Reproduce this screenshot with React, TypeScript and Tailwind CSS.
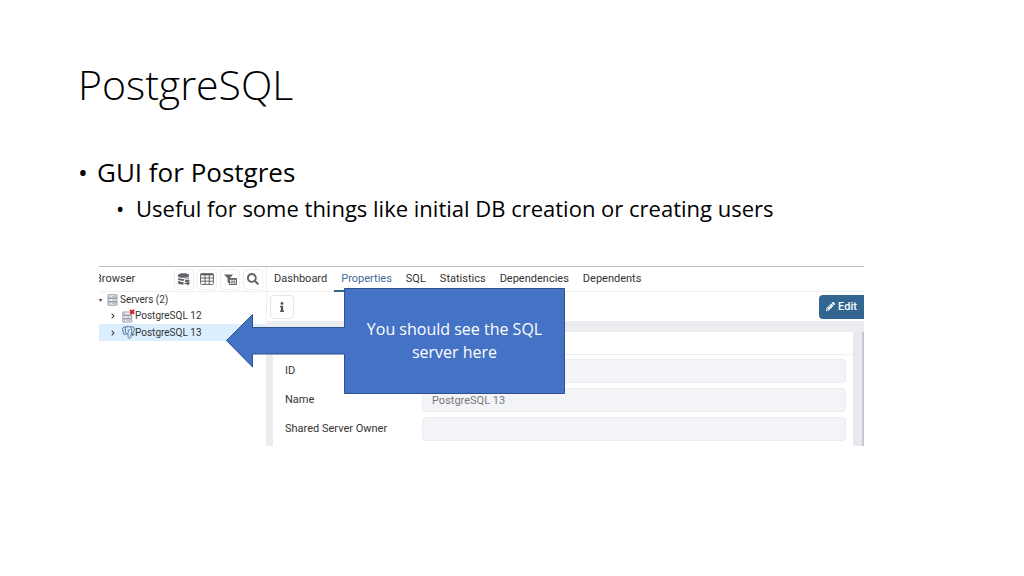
import type { ReactNode } from 'react';
import { FaChevronRight, FaInfo, FaPencilAlt, FaSearch } from 'react-icons/fa';

const tabs = ['Dashboard', 'Properties', 'SQL', 'Statistics', 'Dependencies', 'Dependents'];

const fields = [
  { id: 'server-id', label: 'ID', value: '' },
  { id: 'server-name', label: 'Name', value: 'PostgreSQL 13' },
  { id: 'server-owner', label: 'Shared Server Owner', value: '' },
];

function QueryToolIcon() {
  return (
    <svg viewBox="0 0 12 13" className="h-[13px] w-3" fill="currentColor">
      <path d="M0 2c0-2.400 11-2.400 11 0v1.200c0 2.200-11 2.200-11 0z" />
      <path d="M0 4.700c2 1.600 9 1.600 11 0v1.600H6v1.500C3 7.900 0 7.300 0 6.300z" />
      <path d="M0 7.700c1.500 1 3.500 1.200 5.500 1.200v2.800C2.500 11.700 0 11 0 10z" />
      <path d="M7 7h4.500v1.400H10L12 10.200 9.500 13v-1.700H6.500V10H9L7 8.600z" />
    </svg>
  );
}

function TableIcon() {
  return (
    <svg viewBox="0 0 14 12" className="h-3 w-[14px]" fill="none" stroke="currentColor">
      <rect x=".6" y=".6" width="12.800" height="10.800" rx="1" />
      <path d="M.6 1.500h12.800" strokeWidth="1.800" />
      <path d="M.6 5h12.800M.6 8.200h12.800M5 1v10.400M9.200 1v10.400" />
    </svg>
  );
}

function FilterRowsIcon() {
  return (
    <svg viewBox="0 0 13 11" className="h-[11px] w-[13px]">
      <path d="M0 .5h9L5.800 4.200V10L3.600 8.200V4.200z" fill="currentColor" />
      <rect x="5.500" y="4.500" width="7" height="6" fill="#fff" stroke="currentColor" />
      <path d="M5.500 5.500h7M5.500 8h7M8 5v5.500M10.300 5v5.500" stroke="currentColor" strokeWidth=".8" />
    </svg>
  );
}

function ServersIcon() {
  return (
    <svg viewBox="0 0 11 12" className="h-3 w-[11px] shrink-0" fill="#f3f4f7" stroke="#8b92a0" strokeWidth=".9">
      <path d="M1 .8h9v3.200H1zM1 4.400h9v3.200H1zM1 8h9v3.200H1z" />
      <path d="M2.500 2.400h1.200M5 2.400h4M2.500 6h1.200M5 6h4M2.500 9.600h1.200M5 9.600h4" strokeWidth=".6" />
    </svg>
  );
}

function ServerOffIcon() {
  return (
    <svg viewBox="0 0 13 14" className="h-[14px] w-[13px] shrink-0">
      <g fill="#f4f5f7" stroke="#92959d" strokeWidth=".9">
        <path d="M.8 3h9v3H.8zM.8 6.500h9v3H.8zM.8 10h9v3H.8z" />
        <path d="M2 4.500h1.200M2 8h1.200M4.500 8h4M2 11.500h1.200M4.500 11.500h4" strokeWidth=".6" />
      </g>
      <path d="M8.200.8l4 4m0-4l-4 4" stroke="#d0112b" strokeWidth="1.700" />
    </svg>
  );
}

function ElephantIcon() {
  return (
    <svg viewBox="0 0 13 13" className="h-[13px] w-[13px] shrink-0" fill="#e3effa" stroke="#3d6c9c" strokeWidth="1">
      <path d="M3.800 1.200C1.800.4.500 1.500.7 3.800c.2 2.200 1 4.700 2 4.900.8.100 1.100-.9 1.800-1" />
      <path d="M8.500 1c2.600-.8 4 .6 3.800 2.600-.2 1.700-1 3.400-2.200 4.700 1 .4 1.700.2 2.300-.2-.5.9-1.500 1.300-2.700 1.200" />
      <path d="M3.800 1.200C5 .3 8 .3 9 1.500c1 1.300 1 4.200.4 5.600-.3.900-.4 3.500-.8 4.500-.4.900-1.900 1-2.300 0-.4-1-.1-3.200-.5-4-.5.500-1.500.4-1.900-.3-.6-1.300-.9-4.800-.1-6.100z" />
      <path d="M5.700 7.500c1-.6.500-2.300.4-4M7.600 3.200v1" fill="none" />
    </svg>
  );
}

function ToolButton({ label, children }: { label: string; children: ReactNode }) {
  return (
    <button
      type="button"
      aria-label={label}
      className="flex h-[21px] w-5 items-center justify-center rounded-sm border border-[#eeeff1] text-[#626469]"
    >
      {children}
    </button>
  );
}

function BrowserPane() {
  return (
    <aside className="w-[167px] shrink-0 overflow-hidden">
      <div className="flex h-[25px] items-center border-b border-[#eff0f2]">
        <h2 className="-ml-1 flex-1">Browser</h2>
        <div className="flex gap-[3px] pr-[3px]">
          <ToolButton label="Query tool"><QueryToolIcon /></ToolButton>
          <ToolButton label="View data"><TableIcon /></ToolButton>
          <ToolButton label="Filtered rows"><FilterRowsIcon /></ToolButton>
          <ToolButton label="Search"><FaSearch className="size-3" /></ToolButton>
        </div>
      </div>
      <ul className="text-[10px]">
        <li className="flex h-4 items-center">
          <span className="mr-1 w-1 text-[6px]">▾</span>
          <ServersIcon />
          <span className="ml-[2px]">Servers (2)</span>
        </li>
        <li className="flex h-4 items-center pl-[11px]">
          <FaChevronRight className="mr-[6px] size-[6px]" />
          <ServerOffIcon />
          <span className="whitespace-nowrap">PostgreSQL 12</span>
        </li>
        <li className="flex h-[17px] items-center bg-[#dbeefd] pl-[11px]">
          <FaChevronRight className="mr-[6px] size-[6px]" />
          <ElephantIcon />
          <span className="whitespace-nowrap">PostgreSQL 13</span>
        </li>
      </ul>
    </aside>
  );
}

function PropertiesPane() {
  return (
    <div className="flex min-w-0 flex-1 flex-col">
      <nav className="flex h-[25px] items-center border-b border-l border-[#eff0f2]">
        {tabs.map(tab => (
          <a
            key={tab}
            href="#"
            className={
              tab === 'Properties'
                ? 'flex h-[25px] items-center border-b-2 border-[#326690] px-[7px] pt-px text-[#41699c]'
                : 'flex h-[25px] items-center border-b-2 border-transparent px-[7px] pt-px'
            }
          >
            {tab}
          </a>
        ))}
      </nav>
      <div className="flex h-[29px] items-center justify-between border-l border-[#eff0f2] pl-[3px]">
        <button type="button" aria-label="Info" className="flex size-6 items-center justify-center rounded-sm border border-[#e4e6e9] bg-white">
          <FaInfo className="size-[10px] text-[#555]" />
        </button>
        <button type="button" className="flex h-6 w-[45px] items-center justify-center gap-[3px] rounded-l-sm bg-[#326690] font-medium text-white">
          <FaPencilAlt className="size-[9px]" />
          Edit
        </button>
      </div>
      <div className="flex flex-1 border-t-[11px] border-l-[7px] border-[#ebedf1]">
        <form className="flex-1 rounded-t-sm bg-white">
          <div className="h-[23px] border-b border-[#f0f0f2]" />
          <div className="flex flex-col gap-[5px] pt-1 pr-[7px] pb-[5px] pl-3">
            {fields.map(field => (
              <div key={field.id} className="flex items-center">
                <label htmlFor={field.id} className="w-[137px] shrink-0">{field.label}</label>
                <input
                  id={field.id}
                  readOnly
                  defaultValue={field.value}
                  className="h-6 min-w-0 flex-1 rounded-sm border border-[#ebecef] bg-[#f3f4f7] px-[9px] text-[#777]"
                />
              </div>
            ))}
          </div>
        </form>
        <div className="w-[11px] border-r-2 border-[#c5c8cf] bg-[#e7e9ee]" />
      </div>
    </div>
  );
}

function Callout() {
  return (
    <div className="absolute top-[21px] left-[127px] h-[106px] w-[339px]">
      <svg viewBox="0 0 339 106" className="absolute inset-0 size-full">
        <path
          d="M118.500.5h220v105h-220V66H26.500v13L.5 52.500 26.500 26.500V39.500h92z"
          fill="#4472c4"
          stroke="#2f528f"
        />
      </svg>
      <p className="relative ml-[118px] flex h-full items-center justify-center px-4 text-center font-['Open_Sans',sans-serif] text-[16px] leading-[23px] text-white">
        You should see the SQL server here
      </p>
    </div>
  );
}

export default function App() {
  return (
    <main className="min-h-screen bg-white font-['Open_Sans',sans-serif] text-black">
      <h1 className="px-[78px] pt-14 text-[41px] leading-[56px] font-light">PostgreSQL</h1>

      <ul className="px-[78px] pt-10 text-[26px] leading-10">
        <li>
          <div className="flex">
            <span className="w-[19px]">•</span>
            GUI for Postgres
          </div>
          <ul className="pl-[38px] text-[22px] leading-8">
            <li className="flex">
              <span className="w-5">•</span>
              Useful for some things like initial DB creation or creating users
            </li>
          </ul>
        </li>
      </ul>

      <section className="relative mt-[42px] mr-40 ml-[99px] flex border-t border-[#b9bfc6] font-[Roboto,sans-serif] text-[11px] leading-4 text-[#333]">
        <BrowserPane />
        <PropertiesPane />
        <Callout />
      </section>
    </main>
  );
}
